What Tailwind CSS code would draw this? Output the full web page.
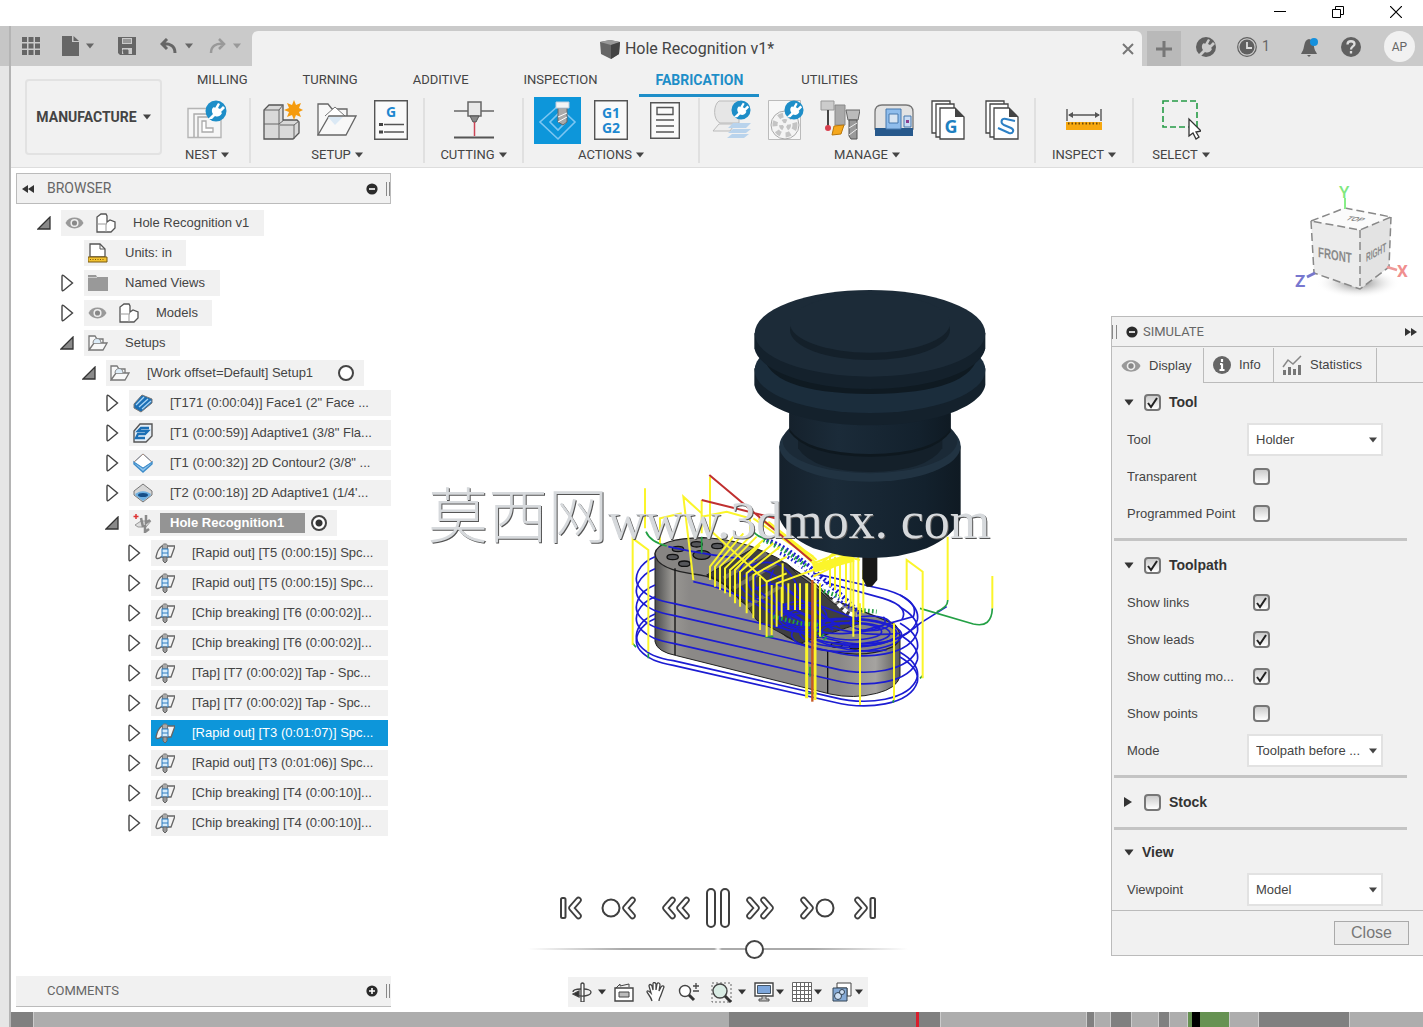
<!DOCTYPE html>
<html lang="en">
<head>
<meta charset="utf-8">
<meta name="viewport" content="width=device-width, initial-scale=1">
<title>Hole Recognition v1*</title>
<script src="https://cdn.jsdelivr.net/npm/@tailwindcss/browser@4"></script>
</head>
<body class="flex min-h-screen flex-col bg-white font-['Liberation_Sans',Arial,sans-serif] text-[13px] text-[#444]">

<!-- shared symbols -->
<svg class="hidden" aria-hidden="true">
  <symbol id="open" viewBox="0 0 14 14"><path d="M13 1v12H1z" fill="#8a8a8a" stroke="#333" stroke-width="1.3"/></symbol>
  <symbol id="closed" viewBox="0 0 14 18"><path d="M3.500 1.500 12.500 9 3.500 16.500c-1 .6-1.500 0-1.500-1v-13c0-1 .5-1.600 1.500-1z" fill="#fff" stroke="#444" stroke-width="1.400"/></symbol>
  <symbol id="caret" viewBox="0 0 8 6"><path d="M0 .5h8L4 5.500z" fill="currentColor"/></symbol>
  <symbol id="eye" viewBox="0 0 20 14"><path d="M.5 7C4-.6 16-.6 19.500 7 16 14.600 4 14.600.5 7z" fill="#999"/><circle cx="10" cy="7" r="4.300" fill="#eee"/><circle cx="10" cy="7" r="2.700" fill="#888"/></symbol>
  <symbol id="body" viewBox="0 0 20 20"><path d="M1 19V4l4-3h5l1 2v6l3-2 5 2v6l-4 4z" fill="#fff" stroke="#555" stroke-width="1.300"/><path d="M11 9l-1 3v7M1 11h9" fill="none" stroke="#999"/></symbol>
  <symbol id="folder" viewBox="0 0 20 20"><path d="M1 17V3h6l2 3h6v4M1 17l5-7h13l-4 7z" fill="#f8f8f8" stroke="#777" stroke-width="1.300"/><path d="M5 10c0-6 8-6 8 0" fill="#dcecf8" stroke="#888"/></symbol>
  <symbol id="drill" viewBox="0 0 20 20"><path d="M1 14C2 9 4 5 7 3h13l-4 11H6c-2 2-5 2-5 0z" fill="#f4f4f4" stroke="#666" stroke-width="1.300"/><path d="M7.500 2c1-1.500 4-1.500 5 0v4h-5z" fill="#aaa" stroke="#777"/><rect x="7" y="6" width="6" height="8" fill="#d7ecfb" stroke="#2f7cc0"/><path d="M8 14h4v4l-2 2-2-2z" fill="#999" stroke="#666"/><path d="M7 10h6" stroke="#2f7cc0"/></symbol>
  <symbol id="plug" viewBox="0 0 22 22"><circle cx="11" cy="11" r="9.500" fill="#1e8ec8" stroke="#1e8ec8" stroke-width="2"/><path d="M3 19l5-5c-2-3-1-6 1-7l1 1 3-5 2 1-2 4 2 1 3-3 2 2-4 4 1 1c-2 4-5 4-7 3l-3 3z" fill="#fff"/></symbol>
  <symbol id="chev" viewBox="0 0 14 24"><path d="M10.500 4 3.500 12l7 8" fill="none" stroke="#3f3f3f" stroke-width="6.500" stroke-linecap="round" stroke-linejoin="round"/><path d="M10.500 4 3.500 12l7 8" fill="none" stroke="#fff" stroke-width="3" stroke-linecap="round" stroke-linejoin="round"/></symbol>
  <symbol id="tick" viewBox="0 0 17 17"><path d="M4 9l3 4 6-9" fill="none" stroke="#222" stroke-width="2"/></symbol>
  <symbol id="minus" viewBox="0 0 12 12"><circle cx="6" cy="6" r="5.600" fill="#2b2b2b"/><path d="M3 6h6" stroke="#fff" stroke-width="1.600"/></symbol>
</svg>

<!-- window buttons -->
<header class="flex h-[26px] items-start justify-end gap-1 text-black">
  <button aria-label="Minimize" class="flex h-[23px] w-[54px] items-center justify-center"><svg class="h-3 w-3" viewBox="0 0 12 12"><path d="M0 5.500h12" stroke="#000"/></svg></button>
  <button aria-label="Restore" class="flex h-[23px] w-[54px] items-center justify-center"><svg class="h-3 w-3" viewBox="0 0 12 12"><path d="M.5 3.500h8v8h-8zM3.500 3V.5h8v8H9" fill="none" stroke="#000"/></svg></button>
  <button aria-label="Close window" class="flex h-[23px] w-[54px] items-center justify-center"><svg class="h-3 w-3" viewBox="0 0 12 12"><path d="M0 0l12 12M12 0 0 12" stroke="#000" stroke-width="1.200"/></svg></button>
</header>

<div class="flex flex-1">
<div class="w-[11px] shrink-0 border-r-2 border-[#b4b4b4] bg-[#e6e6e6]"><div class="h-10 bg-[#c6c6c6]"></div></div>
<div class="flex min-w-0 flex-1 flex-col">

<!-- application bar -->
<div class="flex h-10 bg-[#cacaca] pt-[5px] text-[#666]">
  <div class="flex w-[241px] shrink-0 items-center pb-[5px] pl-[11px]">
    <button aria-label="Data panel"><svg class="h-[18px] w-[18px]" viewBox="0 0 18 18" fill="#666"><path d="M0 0h5v5H0zM6.500 0h5v5h-5zM13 0h5v5h-5zM0 6.500h5v5H0zM6.500 6.500h5v5h-5zM13 6.500h5v5h-5zM0 13h5v5H0zM6.500 13h5v5h-5zM13 13h5v5h-5z"/></svg></button>
    <button aria-label="File" class="ml-[22px] flex items-center gap-[7px]"><svg class="h-5 w-[17px]" viewBox="0 0 17 20" fill="#666"><path d="M0 0h10v6h7v14H0z"/><path d="M11.500 0 17 5h-5.500z"/></svg><svg class="h-[6px] w-2"><use href="#caret"/></svg></button>
    <button aria-label="Save" class="ml-6"><svg class="h-[18px] w-[18px]" viewBox="0 0 18 18"><path d="M0 0h18v18H2l-2-2z" fill="#666"/><path d="M4 1h10v6H4zM4 11h10v6H4z" fill="#cacaca"/><path d="M5 3h8M5 5h8M5 13h5v4H6z" stroke="#666" fill="#666"/></svg></button>
    <button aria-label="Undo" class="ml-6 flex items-center gap-2"><svg class="h-4 w-[17px]" viewBox="0 0 17 16"><path d="M7 1 2 6l5 5M2 6c8-1 13 2 13 9" fill="none" stroke="#666" stroke-width="3"/></svg><svg class="h-[6px] w-2"><use href="#caret"/></svg></button>
    <button aria-label="Redo" class="ml-4 flex items-center gap-[7px] text-[#999]"><svg class="h-4 w-[17px]" viewBox="0 0 17 16"><path d="M10 1l5 5-5 5M15 6C7 5 2 8 2 15" fill="none" stroke="#999" stroke-width="2.500"/></svg><svg class="h-[6px] w-2"><use href="#caret"/></svg></button>
  </div>
  <div class="flex flex-1 items-center rounded-t-md bg-[#f1f1f1] pr-2">
    <h1 class="flex flex-1 items-center justify-center gap-[5px] font-[Roboto,sans-serif] text-[16px] text-[#444]"><svg class="h-5 w-5" viewBox="0 0 20 20"><path d="M0 3l10-2 10 2-1 12-8 5-10-5z" fill="#666"/><path d="M0 3l11 3 9-3-10-2z" fill="#999"/><path d="M11 6v14l8-5 1-12z" fill="#444"/></svg>Hole Recognition v1*</h1>
    <button aria-label="Close tab"><svg class="h-3 w-3" viewBox="0 0 12 12"><path d="M1 1l10 10M11 1 1 11" stroke="#777" stroke-width="2"/></svg></button>
  </div>
  <div class="flex w-[281px] shrink-0 items-center">
    <button aria-label="New design" class="ml-[5px] flex h-full w-[34px] items-center justify-center bg-[#b9b9b9]"><svg class="h-4 w-4" viewBox="0 0 16 16"><path d="M8 0v16M0 8h16" stroke="#777" stroke-width="3"/></svg></button>
    <div class="flex items-center pb-1">
      <button aria-label="Extensions" class="ml-[15px]"><svg class="h-5 w-5" viewBox="0 0 20 20"><circle cx="10" cy="10" r="10" fill="#606060"/><path d="M1 19l6-6c-2-3-1-6 1-7l1 1 3-5 2 1-2 4 2 1 3-3 2 2-4 4 1 1c-2 4-5 4-7 3l-5 5z" fill="#cacaca"/></svg></button>
      <button aria-label="Job status" class="ml-[21px] flex items-center gap-[5px] font-[Roboto,sans-serif] text-[14px]"><svg class="h-5 w-5" viewBox="0 0 20 20"><circle cx="10" cy="10" r="9.300" fill="none" stroke="#606060" stroke-width="1.200"/><circle cx="10" cy="10" r="7.500" fill="#606060"/><path d="M10 5v6h5" fill="none" stroke="#ddd" stroke-width="1.800"/></svg>1</button>
      <button aria-label="Notifications" class="ml-[30px]"><svg class="h-5 w-5" viewBox="0 0 20 20"><path d="M2 15c3-3 1-12 7-13 6 1 4 10 7 13l1 2H1zM7 18h4l-2 2z" fill="#606060"/><circle cx="14" cy="5" r="4" fill="#1590dd"/></svg></button>
      <button aria-label="Help" class="ml-[21px]"><svg class="h-5 w-5" viewBox="0 0 20 20"><circle cx="10" cy="10" r="10" fill="#606060"/><path d="M6.500 7.500c0-4.500 7-4 7-.5 0 2.500-3.500 2.500-3.500 5.500M10 14v2.500" fill="none" stroke="#ddd" stroke-width="2.300"/></svg></button>
      <button class="ml-[23px] h-[31px] w-[31px] rounded-full bg-[#f1f1f1] font-[Roboto,sans-serif] text-[12px]">AP</button>
    </div>
  </div>
</div>

<!-- ribbon -->
<div class="flex h-[102px] border-b border-[#ddd] bg-[#f1f1f1] font-[Roboto,sans-serif] text-[13px] text-[#444]">
  <button class="mt-[13px] ml-[14px] flex h-[76px] w-[137px] shrink-0 items-center justify-center gap-[6px] rounded border-2 border-[#e2e2e2] text-[14px] font-bold">MANUFACTURE<svg class="h-[6px] w-2"><use href="#caret"/></svg></button>
  <div class="ml-[3px] flex flex-col">
    <nav class="flex gap-[29px] pl-[19px]">
      <a href="#" class="flex h-[31px] items-center border-b-[3px] border-transparent px-[13px]">MILLING</a>
      <a href="#" class="flex h-[31px] items-center border-b-[3px] border-transparent px-[13px]">TURNING</a>
      <a href="#" class="flex h-[31px] items-center border-b-[3px] border-transparent px-[13px]">ADDITIVE</a>
      <a href="#" class="flex h-[31px] items-center border-b-[3px] border-transparent px-[13px]">INSPECTION</a>
      <a href="#" class="flex h-[31px] items-center border-b-[3px] border-[#1e8ec8] px-4 text-[14px] font-bold text-[#1e8ec8]">FABRICATION</a>
      <a href="#" class="flex h-[31px] items-center border-b-[3px] border-transparent px-[13px]">UTILITIES</a>
    </nav>
    <div class="flex h-[70px]">
      <section class="flex w-[84px] flex-col items-center">
        <div class="flex h-[46px] shrink-0 items-center">
          <button aria-label="Nest" class="flex w-[54px] justify-center"><svg class="h-10 w-10" viewBox="0 0 40 40"><path d="M1 8.500h33v29H1z" fill="#f6f6f6" stroke="#b5b5b5" stroke-width="1.400"/><path d="M7 37V14h20M11 37V17h14" fill="none" stroke="#aaa" stroke-width="1.400"/><path d="M15 32V21h4v7h7v4z" fill="#fff" stroke="#aaa" stroke-width="1.300"/><use href="#plug" x="18" y="0" width="22" height="22"/></svg></button>
        </div>
        <button class="flex h-6 shrink-0 items-center gap-1">NEST<svg class="h-[6px] w-2"><use href="#caret"/></svg></button>
      </section>
      <span class="mt-[1px] h-[65px] w-[2px] bg-[#e0e0e0]"></span>
      <section class="flex w-[172px] flex-col items-center">
        <div class="flex h-[46px] shrink-0 items-center">
          <button aria-label="Setup" class="flex w-[54px] justify-center"><svg class="h-10 w-10" viewBox="0 0 40 40"><path d="M1 39V10l5-5h14v15h14l2 2v11l-6 6z" fill="#d9d9d9" stroke="#555" stroke-width="1.300"/><path d="M1 24h15v15M16 24V10M1 10h15l4-5M16 24l5-4M31 39V25H17M31 25l5-4" fill="none" stroke="#666"/><path d="M31 0l2 5 5-2-2 5 4 2-4 2 2 5-5-2-2 5-2-5-5 2 2-5-5-2 5-2-2-5 5 2z" fill="#f59b0e"/></svg></button>
          <button aria-label="Open folder" class="flex w-[54px] justify-center"><svg class="h-9 w-10" viewBox="0 0 40 36"><path d="M1 33V2h10l4 5h15v7" fill="#f8f8f8" stroke="#666" stroke-width="1.300"/><path d="M8 14l10-9 10 9" fill="#fff" stroke="#777"/><path d="M1 33 12 14h27L29 33z" fill="#f8f8f8" stroke="#666" stroke-width="1.300"/><path d="M11 15h15l-8 8z" fill="#dbe9f5"/></svg></button>
          <button aria-label="NC program" class="flex w-[54px] justify-center"><svg class="h-10 w-[34px]" viewBox="0 0 34 40"><path d="M.7.700h32.600v38.600H.7z" fill="#fafafa" stroke="#555" stroke-width="1.400"/><text x="17" y="17" text-anchor="middle" font-family="Open Sans" font-weight="700" font-size="14" fill="#1e88d0">G</text><path d="M10 24.500h20M10 32h20" stroke="#555" stroke-width="1.300"/><path d="M5 23h4v3H5zM5 30.500h4v3H5z" fill="#444"/></svg></button>
        </div>
        <button class="flex h-6 shrink-0 items-center gap-1">SETUP<svg class="h-[6px] w-2"><use href="#caret"/></svg></button>
      </section>
      <span class="mt-[1px] h-[65px] w-[2px] bg-[#e0e0e0]"></span>
      <section class="flex w-[97px] flex-col items-center">
        <div class="flex h-[46px] shrink-0 items-center">
          <button aria-label="Cutting" class="flex w-[54px] justify-center"><svg class="h-[38px] w-10" viewBox="0 0 40 38"><path d="M0 10h40" stroke="#666" stroke-width="1.500"/><path d="M14 1h13v14H14z" fill="#e8e8e8" stroke="#666" stroke-width="1.500"/><path d="M16 15h9l-3 6h-3z" fill="#888" stroke="#555"/><path d="M20.500 21v14" stroke="#cc4455" stroke-width="1.500"/><path d="M0 36.500h40" stroke="#555" stroke-width="2"/></svg></button>
        </div>
        <button class="flex h-6 shrink-0 items-center gap-1">CUTTING<svg class="h-[6px] w-2"><use href="#caret"/></svg></button>
      </section>
      <span class="mt-[1px] h-[65px] w-[2px] bg-[#e0e0e0]"></span>
      <section class="flex w-[174px] flex-col items-center">
        <div class="flex h-[46px] shrink-0 items-center">
          <button aria-label="Simulate" class="flex w-[54px] justify-center"><svg class="h-[47px] w-[47px] bg-[#0d96da]" viewBox="0 0 47 47"><path d="M24 9 41 25 24 42 6 25z M24 17l8 8-8 8-8-8z" fill="none" stroke="#7cc6f2" stroke-width="1.600"/><path d="M24 11h9v14l-4 3-5-3z" fill="#aaa" stroke="#666"/><path d="M24 20l9-4M24 25l9-5" stroke="#fff"/><path d="M22 5h13v6H22z" fill="#f4f4f4" stroke="#bcd"/></svg></button>
          <button aria-label="Post process" class="flex w-[54px] justify-center"><svg class="h-10 w-[34px]" viewBox="0 0 34 40"><path d="M.7.700h32.600v38.600H.7z" fill="#fafafa" stroke="#555" stroke-width="1.400"/><g text-anchor="middle" font-family="Open Sans" font-weight="700" font-size="14" fill="#1e88d0"><text x="17" y="18">G1</text><text x="17" y="33">G2</text></g></svg></button>
          <button aria-label="Setup sheet" class="flex w-[54px] justify-center"><svg class="h-[37px] w-[30px]" viewBox="0 0 30 37" fill="#fafafa" stroke="#555" stroke-width="1.400"><path d="M.7.700h28.600v35.600H.7zM7 5.500h16v7H7zM6 18h18M6 24h18M6 30h18"/></svg></button>
        </div>
        <button class="flex h-6 shrink-0 items-center gap-1">ACTIONS<svg class="h-[6px] w-2"><use href="#caret"/></svg></button>
      </section>
      <span class="mt-[1px] h-[65px] w-[2px] bg-[#e0e0e0]"></span>
      <section class="flex w-[334px] flex-col items-center">
        <div class="flex h-[46px] shrink-0 items-center">
          <button aria-label="Additive build" class="flex w-[54px] justify-center"><svg class="h-10 w-10" viewBox="0 0 40 40"><path d="M7 1h20v22H8C1 20 1 5 7 1z" fill="#e6e6e6" stroke="#bbb"/><path d="M7 24 1 31h17l5-7z" fill="#eee" stroke="#bbb"/><path d="M21 23h18l-5 5H16zM21 29h18l-5 4H16zM20 34h17l-5 4H15z" fill="#b9d3ec"/><use href="#plug" x="19" y="0" width="20" height="20"/></svg></button>
          <button aria-label="Material library" class="flex w-[54px] justify-center"><svg class="h-10 w-9" viewBox="0 0 36 40"><path d="M.5.500h32v39H.5z" fill="#f7f7f7" stroke="#bbb"/><circle cx="17" cy="25" r="14" fill="#f4f4f4" stroke="#aaa"/><circle cx="17" cy="25" r="10" fill="none" stroke="#c4c4c4" stroke-width="5" stroke-dasharray="5 5"/><circle cx="17" cy="25" r="4" fill="none" stroke="#c4c4c4" stroke-width="4" stroke-dasharray="4 4"/><use href="#plug" x="16" y="0" width="20" height="20"/></svg></button>
          <button aria-label="Tool library" class="flex w-[54px] justify-center"><svg class="h-10 w-10" viewBox="0 0 40 40"><path d="M1 1h13v9H1z" fill="#ccc" stroke="#999"/><path d="M8 10v17" stroke="#444" stroke-width="2"/><circle cx="8" cy="28" r="3" fill="#d9404f"/><path d="M15 5h10v20H15z" fill="#aaa" stroke="#888"/><path d="M14 26l10-1-3 9-9 1z" fill="#f5a81c" stroke="#b9770b"/><path d="M26 10h14l-2 10H28z" fill="#bbb" stroke="#666"/><path d="M29 20h8v19h-6l-2-3z" fill="#999" stroke="#555"/><path d="M29 28l8-5M29 35l8-6" stroke="#eee"/></svg></button>
          <button aria-label="Machine library" class="flex w-[54px] justify-center"><svg class="h-8 w-10" viewBox="0 0 40 32"><path d="M1 25V8q0-7 7-7h24q7 0 7 7v17z" fill="#e3e3e3" stroke="#777" stroke-width="1.300"/><path d="M1 24h38v8H1z" fill="#27598c"/><path d="M12 5h15v20H12z" fill="#8fbdec" stroke="#4678ad"/><path d="M15 10h9v9h-9z" fill="#d8e5f2" stroke="#4678ad"/><path d="M30 12h7v11h-7z" fill="#c8dcf5" stroke="#4678ad"/><path d="M32 16h3v3h-3z" fill="#8b3f8f"/></svg></button>
          <button aria-label="Post library" class="flex w-[54px] justify-center"><svg class="h-10 w-[34px]" viewBox="0 0 34 40"><g fill="#fff" stroke="#444" stroke-width="1.300"><path d="M1 33V1h18v32z"/><path d="M5 37V4h18v33z"/><path d="M9 39V8h15l9 9v22z"/></g><path d="M24 8v9h9z" fill="#444"/><text x="20" y="33" text-anchor="middle" font-family="Open Sans" font-weight="700" font-size="18" fill="#1e80c0">G</text></svg></button>
          <button aria-label="Template library" class="flex w-[54px] justify-center"><svg class="h-10 w-[34px]" viewBox="0 0 34 40"><g fill="#fff" stroke="#444" stroke-width="1.300"><path d="M1 33V1h18v32z"/><path d="M5 37V4h18v33z"/><path d="M9 39V8h15l9 9v22z"/></g><path d="M24 8v9h9z" fill="#444"/><path d="M30 21l-9-2c-5-1-6 4-2 6l7 3c4 2 2 6-2 5l-11-5" fill="none" stroke="#2d80c5" stroke-width="2"/></svg></button>
        </div>
        <button class="flex h-6 shrink-0 items-center gap-1">MANAGE<svg class="h-[6px] w-2"><use href="#caret"/></svg></button>
      </section>
      <span class="mt-[1px] h-[65px] w-[2px] bg-[#e0e0e0]"></span>
      <section class="flex w-[96px] flex-col items-center">
        <div class="flex h-[46px] shrink-0 items-center">
          <button aria-label="Measure" class="flex w-[54px] justify-center"><svg class="h-[22px] w-9" viewBox="0 0 36 22"><path d="M1 0v12M35 0v12M3 6h30" stroke="#555" stroke-width="1.400"/><path d="M2 6l5-3v6zM34 6l-5-3v6z" fill="#555"/><path d="M0 13h36v8H0z" fill="#f7a80f"/><path d="M2 14.500h32" stroke="#6b4a0a" stroke-width="2" stroke-dasharray="1.500 2"/></svg></button>
        </div>
        <button class="flex h-6 shrink-0 items-center gap-1">INSPECT<svg class="h-[6px] w-2"><use href="#caret"/></svg></button>
      </section>
      <span class="mt-[1px] h-[65px] w-[2px] bg-[#e0e0e0]"></span>
      <section class="flex w-[94px] flex-col items-center">
        <div class="flex h-[46px] shrink-0 items-center">
          <button aria-label="Select" class="flex w-[54px] justify-center"><svg class="h-10 w-[39px]" viewBox="0 0 39 40"><path d="M1 1h34v26H1z" fill="none" stroke="#259b45" stroke-width="1.600" stroke-dasharray="6 3"/><path d="M27 19v17l4-3 3 6 3-2-3-5 5-1z" fill="#fff" stroke="#333" stroke-width="1.300"/></svg></button>
        </div>
        <button class="flex h-6 shrink-0 items-center gap-1">SELECT<svg class="h-[6px] w-2"><use href="#caret"/></svg></button>
      </section>
    </div>
  </div>
</div>

<!-- workspace -->
<main class="flex flex-1">
  <aside class="ml-[5px] flex w-[375px] shrink-0 flex-col pt-[5px] pb-[5px]">
    <h2 class="flex h-[31px] items-center border border-[#bbb] bg-[#f1f1f1] pl-[5px] font-[Roboto,sans-serif] text-[14px] text-[#666]">
      <svg class="h-2 w-3" viewBox="0 0 12 8"><path d="M6 0v8L0 4zM12 0v8L6 4z" fill="#333"/></svg><span class="ml-[13px] flex-1">BROWSER</span><svg class="h-3 w-3"><use href="#minus"/></svg><span class="ml-2 h-[14px] w-[4px] border-x border-[#888]"></span>
    </h2>
    <ul class="mt-[4px]">
      <li class="flex h-[30px] items-center gap-[10px] pl-[21px]"><svg class="h-[14px] w-[14px] shrink-0"><use href="#open"/></svg><span class="flex h-[26px] items-center gap-[17px] bg-[#f1f1f1] pr-[15px] pl-1"><span class="flex items-center gap-3"><svg class="h-[14px] w-[19px]"><use href="#eye"/></svg><svg class="h-5 w-5"><use href="#body"/></svg></span>Hole Recognition v1</span></li>
      <li class="flex h-[30px] items-center pl-[68px]"><span class="flex h-[26px] items-center gap-[17px] bg-[#f1f1f1] pr-[14px] pl-1"><svg class="h-5 w-5" viewBox="0 0 20 20"><path d="M2 14V1h10l5 5v8z" fill="#fff" stroke="#555" stroke-width="1.300"/><path d="M12 1v5h5" fill="none" stroke="#555"/><path d="M0 14h19v5H0z" fill="#f2c230" stroke="#7a5a10"/><path d="M2 16.500h15" stroke="#7a5a10" stroke-dasharray="1 1.500"/></svg>Units: in</span></li>
      <li class="flex h-[30px] items-center gap-[10px] pl-[44px]"><svg class="h-[18px] w-[14px] shrink-0"><use href="#closed"/></svg><span class="flex h-[26px] items-center gap-[17px] bg-[#f1f1f1] pr-[15px] pl-1"><svg class="h-5 w-5" viewBox="0 0 20 20"><path d="M0 2h8l1 2h11v14H0z" fill="#999"/><path d="M0 4.500h9" stroke="#ccc"/></svg>Named Views</span></li>
      <li class="flex h-[30px] items-center gap-[10px] pl-[44px]"><svg class="h-[18px] w-[14px] shrink-0"><use href="#closed"/></svg><span class="flex h-[26px] items-center gap-[17px] bg-[#f1f1f1] pr-[14px] pl-1"><span class="flex items-center gap-3"><svg class="h-[14px] w-[19px]"><use href="#eye"/></svg><svg class="h-5 w-5"><use href="#body"/></svg></span>Models</span></li>
      <li class="flex h-[30px] items-center gap-[10px] pl-[44px]"><svg class="h-[14px] w-[14px] shrink-0"><use href="#open"/></svg><span class="flex h-[26px] items-center gap-[17px] bg-[#f1f1f1] pr-[15px] pl-1"><svg class="h-5 w-5"><use href="#folder"/></svg>Setups</span></li>
      <li class="flex h-[30px] items-center gap-[10px] pl-[66px]"><svg class="h-[14px] w-[14px] shrink-0"><use href="#open"/></svg><span class="flex h-[26px] items-center bg-[#f1f1f1] pr-[10px] pl-1"><svg class="h-5 w-5"><use href="#folder"/></svg><label for="setup1" class="mr-[25px] ml-[17px]">[Work offset=Default] Setup1</label><input id="setup1" type="radio" name="active" class="h-4 w-4 appearance-none rounded-full border-2 border-[#444] bg-white"></span></li>

      <li class="flex h-[30px] items-center gap-[10px] pl-[89px]"><svg class="h-[18px] w-[14px] shrink-0"><use href="#closed"/></svg><span class="flex h-[26px] flex-1 items-center gap-[17px] bg-[#f1f1f1] pl-1 whitespace-nowrap"><svg class="h-5 w-5 shrink-0" viewBox="0 0 20 20"><path d="M1 11 9 2l10 4v4L8 19l-7-4z" fill="#1b6fb5" stroke="#777"/><path d="M3 12 11 4M6 14l9-8M9 16l9-8" stroke="#a8d4f5" stroke-width="1.300"/></svg>[T171 (0:00:04)] Face1 (2" Face ...</span></li>
      <li class="flex h-[30px] items-center gap-[10px] pl-[89px]"><svg class="h-[18px] w-[14px] shrink-0"><use href="#closed"/></svg><span class="flex h-[26px] flex-1 items-center gap-[17px] bg-[#f1f1f1] pl-1 whitespace-nowrap"><svg class="h-5 w-5 shrink-0" viewBox="0 0 20 20"><path d="M1 19V8l6-7h12v12l-6 6z" fill="#e4eef7" stroke="#555" stroke-width="1.400"/><path d="M16 5H8L5 8h10l-3 3H5l-2 4h9" fill="none" stroke="#1b6fb5" stroke-width="2.300"/></svg>[T1 (0:00:59)] Adaptive1 (3/8" Fla...</span></li>
      <li class="flex h-[30px] items-center gap-[10px] pl-[89px]"><svg class="h-[18px] w-[14px] shrink-0"><use href="#closed"/></svg><span class="flex h-[26px] flex-1 items-center gap-[17px] bg-[#f1f1f1] pl-1 whitespace-nowrap"><svg class="h-5 w-5 shrink-0" viewBox="0 0 20 20"><path d="M1 9l9 6 9-6v2l-9 8-9-8z" fill="#8fc4ee" stroke="#3d8cc9" stroke-width="1.400"/><path d="M10 1l9 8-9 6-9-6z" fill="#fff" stroke="#3d8cc9"/><path d="M1 9l9-8 9 8" fill="none" stroke="#b09080"/></svg>[T1 (0:00:32)] 2D Contour2 (3/8" ...</span></li>
      <li class="flex h-[30px] items-center gap-[10px] pl-[89px]"><svg class="h-[18px] w-[14px] shrink-0"><use href="#closed"/></svg><span class="flex h-[26px] flex-1 items-center gap-[17px] bg-[#f1f1f1] pl-1 whitespace-nowrap"><svg class="h-5 w-5 shrink-0" viewBox="0 0 20 20"><path d="M10 1l9 7v4l-9 7-9-7V8z" fill="#d6d6d6" stroke="#777"/><path d="M2 12c3-5 13-5 16 0l-8 6z" fill="#6db0e2"/><ellipse cx="10" cy="12" rx="5" ry="2" fill="#174f87"/></svg>[T2 (0:00:18)] 2D Adaptive1 (1/4'...</span></li>
      <li class="flex h-[30px] items-center gap-[10px] pl-[89px]"><svg class="h-[14px] w-[14px] shrink-0"><use href="#open"/></svg><span class="flex h-[26px] items-center bg-[#f1f1f1] pr-[10px] pl-1"><svg class="h-5 w-5" viewBox="0 0 20 20"><path d="M2 12l6-4h10l-5 6H5z" fill="#ddd" stroke="#999"/><path d="M8 5l2 9M13 2v8l4-3M12 12v7l4-3" fill="none" stroke="#8a8a8a" stroke-width="2.500"/><path d="M3 1v5M.5 3.500h5" stroke="#d33" stroke-width="1.500"/></svg><label for="hole1" class="ml-[7px] bg-[#949494] pr-[21px] pl-[10px] leading-[20px] font-bold text-white">Hole Recognition1</label><input id="hole1" type="radio" name="active" checked class="ml-[6px] h-4 w-4 appearance-none rounded-full border-2 border-[#444] bg-[radial-gradient(#333_0_3px,#fff_4px)]"></span></li>

      <li class="flex h-[30px] items-center gap-[10px] pr-[3px] pl-[111px]"><svg class="h-[18px] w-[14px] shrink-0"><use href="#closed"/></svg><span class="flex h-[26px] flex-1 items-center gap-[17px] bg-[#f1f1f1] pl-1 whitespace-nowrap"><svg class="h-5 w-5 shrink-0"><use href="#drill"/></svg>[Rapid out] [T5 (0:00:15)] Spc...</span></li>
      <li class="flex h-[30px] items-center gap-[10px] pr-[3px] pl-[111px]"><svg class="h-[18px] w-[14px] shrink-0"><use href="#closed"/></svg><span class="flex h-[26px] flex-1 items-center gap-[17px] bg-[#f1f1f1] pl-1 whitespace-nowrap"><svg class="h-5 w-5 shrink-0"><use href="#drill"/></svg>[Rapid out] [T5 (0:00:15)] Spc...</span></li>
      <li class="flex h-[30px] items-center gap-[10px] pr-[3px] pl-[111px]"><svg class="h-[18px] w-[14px] shrink-0"><use href="#closed"/></svg><span class="flex h-[26px] flex-1 items-center gap-[17px] bg-[#f1f1f1] pl-1 whitespace-nowrap"><svg class="h-5 w-5 shrink-0"><use href="#drill"/></svg>[Chip breaking] [T6 (0:00:02)]...</span></li>
      <li class="flex h-[30px] items-center gap-[10px] pr-[3px] pl-[111px]"><svg class="h-[18px] w-[14px] shrink-0"><use href="#closed"/></svg><span class="flex h-[26px] flex-1 items-center gap-[17px] bg-[#f1f1f1] pl-1 whitespace-nowrap"><svg class="h-5 w-5 shrink-0"><use href="#drill"/></svg>[Chip breaking] [T6 (0:00:02)]...</span></li>
      <li class="flex h-[30px] items-center gap-[10px] pr-[3px] pl-[111px]"><svg class="h-[18px] w-[14px] shrink-0"><use href="#closed"/></svg><span class="flex h-[26px] flex-1 items-center gap-[17px] bg-[#f1f1f1] pl-1 whitespace-nowrap"><svg class="h-5 w-5 shrink-0"><use href="#drill"/></svg>[Tap] [T7 (0:00:02)] Tap - Spc...</span></li>
      <li class="flex h-[30px] items-center gap-[10px] pr-[3px] pl-[111px]"><svg class="h-[18px] w-[14px] shrink-0"><use href="#closed"/></svg><span class="flex h-[26px] flex-1 items-center gap-[17px] bg-[#f1f1f1] pl-1 whitespace-nowrap"><svg class="h-5 w-5 shrink-0"><use href="#drill"/></svg>[Tap] [T7 (0:00:02)] Tap - Spc...</span></li>
      <li class="flex h-[30px] items-center gap-[10px] pr-[3px] pl-[111px]"><svg class="h-[18px] w-[14px] shrink-0"><use href="#closed"/></svg><span class="flex h-[26px] flex-1 items-center gap-[17px] bg-[#0d96da] pl-1 whitespace-nowrap text-white"><svg class="h-5 w-5 shrink-0"><use href="#drill"/></svg>[Rapid out] [T3 (0:01:07)] Spc...</span></li>
      <li class="flex h-[30px] items-center gap-[10px] pr-[3px] pl-[111px]"><svg class="h-[18px] w-[14px] shrink-0"><use href="#closed"/></svg><span class="flex h-[26px] flex-1 items-center gap-[17px] bg-[#f1f1f1] pl-1 whitespace-nowrap"><svg class="h-5 w-5 shrink-0"><use href="#drill"/></svg>[Rapid out] [T3 (0:01:06)] Spc...</span></li>
      <li class="flex h-[30px] items-center gap-[10px] pr-[3px] pl-[111px]"><svg class="h-[18px] w-[14px] shrink-0"><use href="#closed"/></svg><span class="flex h-[26px] flex-1 items-center gap-[17px] bg-[#f1f1f1] pl-1 whitespace-nowrap"><svg class="h-5 w-5 shrink-0"><use href="#drill"/></svg>[Chip breaking] [T4 (0:00:10)]...</span></li>
      <li class="flex h-[30px] items-center gap-[10px] pr-[3px] pl-[111px]"><svg class="h-[18px] w-[14px] shrink-0"><use href="#closed"/></svg><span class="flex h-[26px] flex-1 items-center gap-[17px] bg-[#f1f1f1] pl-1 whitespace-nowrap"><svg class="h-5 w-5 shrink-0"><use href="#drill"/></svg>[Chip breaking] [T4 (0:00:10)]...</span></li>
    </ul>
    <h2 class="mt-auto flex h-[31px] items-center border-b border-[#bbb] bg-[#f1f1f1] pl-[31px] font-[Roboto,sans-serif] text-[13px] text-[#666]">
      <span class="flex-1">COMMENTS</span><svg class="h-3 w-3" viewBox="0 0 12 12"><circle cx="6" cy="6" r="5.600" fill="#2b2b2b"/><path d="M3 6h6M6 3v6" stroke="#fff" stroke-width="1.600"/></svg><span class="mr-[1px] ml-2 h-[14px] w-[4px] border-x border-[#888]"></span>
    </h2>
  </aside>

  <!-- viewport -->
  <section class="flex min-w-0 flex-1 flex-col items-center pr-[66px] pb-[5px]">
    <div class="relative mt-[102px] h-[450px] w-[580px]">
      <svg class="h-[450px] w-[580px]" viewBox="-516 0 1740 1350" aria-label="Toolpath simulation">
        <defs>
          <linearGradient id="steel" x1="0" x2="1"><stop offset="0" stop-color="#4c4c4c"/><stop offset=".07" stop-color="#999793"/><stop offset=".14" stop-color="#8b8987"/><stop offset=".75" stop-color="#8b8987"/><stop offset=".9" stop-color="#a5a3a0"/><stop offset="1" stop-color="#5a5a5a"/></linearGradient>
          <linearGradient id="holder" x1="0" x2="1"><stop offset="0" stop-color="#15212c"/><stop offset=".3" stop-color="#1b2b39"/><stop offset=".8" stop-color="#13212d"/><stop offset="1" stop-color="#0f1a23"/></linearGradient>
          <path id="loop" d="M165 860C115 880 95 925 120 955Q150 990 220 1000L700 1110C800 1135 930 1120 952 1050Q960 1010 900 975"/>
        </defs>
        <!-- part -->
        <path d="M165 850V1115Q170 1145 230 1157L690 1272Q760 1288 830 1270 890 1255 900 1220V1110Q700 1000 560 880L330 810z" fill="url(#steel)" stroke="#222" stroke-width="3"/>
        <path d="M165 850Q175 805 310 803 420 808 500 850L600 910Q640 930 690 985L880 1060Q920 1100 880 1130 800 1165 700 1145 620 1135 560 1100L420 990Q370 925 300 915 165 900 165 850z" fill="#878583" stroke="#222" stroke-width="4"/>
        <path d="M320 915 460 835Q540 855 590 910 650 950 700 1000 760 1030 780 1060L600 1120 470 1050Q400 940 320 915z" fill="#3f3f41" stroke="#222" stroke-width="3"/>
        <path d="M370 925 500 850M400 955 530 880M440 1010 540 950" fill="none" stroke="#6d6b69" stroke-width="12"/>
        <path d="M225 895V1155M683 1140V1270" stroke="#111" stroke-width="4"/>
        <g fill="#55565a" stroke="#111" stroke-width="4"><ellipse cx="290" cy="823" rx="17" ry="8"/><ellipse cx="352" cy="828" rx="17" ry="8"/><ellipse cx="234" cy="837" rx="17" ry="8"/><ellipse cx="218" cy="861" rx="17" ry="8"/><ellipse cx="253" cy="881" rx="17" ry="8"/><ellipse cx="305" cy="855" rx="26" ry="13"/><ellipse cx="710" cy="1125" rx="17" ry="7"/><ellipse cx="765" cy="1130" rx="17" ry="7"/></g>
        <!-- cutting moves -->
        <g fill="none" stroke="#1c1cd2" stroke-width="5">
          <use href="#loop"/><use href="#loop" y="36"/><use href="#loop" y="85"/><use href="#loop" y="120"/><use href="#loop" y="172"/><use href="#loop" y="186"/>
          <path d="M205 830Q340 860 470 870M280 935Q420 960 560 1060T860 1140M640 910 860 960Q960 990 940 1040L760 1090M650 930 850 985Q930 1010 905 1050M560 1000Q700 1110 900 1090M1040 1010 960 1060Q860 1150 700 1120"/>
          <path d="M430 880Q380 960 500 1000T640 1090M450 900Q420 960 520 1010T680 1090M470 910Q440 960 540 1000T700 1080M520 900Q480 980 600 1050M520 990Q600 1100 740 1090T850 1040M440 890Q520 860 560 900T600 1000M430 920Q480 880 530 920T560 1030M460 960Q520 920 580 970T700 1060M500 1020 640 1000 780 1050M520 1070 700 1050M560 960 720 1070M540 1040 660 990"/>
          <ellipse cx="740" cy="1095" rx="165" ry="50"/><ellipse cx="745" cy="1090" rx="145" ry="42"/><ellipse cx="750" cy="1090" rx="120" ry="32"/><ellipse cx="755" cy="1085" rx="90" ry="25"/><ellipse cx="810" cy="1060" rx="60" ry="22"/><ellipse cx="600" cy="1040" rx="80" ry="45"/><ellipse cx="600" cy="1045" rx="62" ry="32"/><ellipse cx="600" cy="1050" rx="40" ry="20"/>
          <path d="M500 810Q560 830 640 900T780 1030" stroke-width="14" stroke-dasharray="6 7"/>
          <path d="M540 850Q590 870 660 940T770 1020" stroke-width="10" stroke-dasharray="5 8"/>
        </g>
        <path d="M590 880Q640 900 690 970T770 1035" fill="none" stroke="#fff" stroke-width="13" stroke-dasharray="13 9"/>
        <!-- leads -->
        <g fill="none" stroke="#23a045" stroke-width="5">
          <path d="M138 785Q150 815 200 828M457 770Q455 795 500 808M960 1015 1120 1062Q1175 1075 1177 1015M1043 990Q1045 1010 1010 1025M305 800V850"/>
          <path d="M490 810Q560 840 620 890M520 1040 600 1060 660 1065M660 960 720 980M780 1020 830 1025M640 1070 680 1110" stroke-width="13" stroke-dasharray="5 7"/>
          <path d="M98 1120l10 12M145 1150v15M960 1225l8 -8M620 1270h30M880 1290v8M630 1190v30M495 1100h25"/>
        </g>
        <!-- links -->
        <g fill="none" stroke="#fbf52a" stroke-width="6">
          <path d="M98 1125V805L145 840V1145M135 655V775M180 820V745L245 730M280 930 250 680 305 730V790M330 620V780L500 935M305 690V740L380 725 450 745V800M500 1100V935L560 910M515 1095V945M548 1000V880M920 960V870L968 905V1225M1043 990V800M1177 1015V918M882 1290V1060M780 1305V1000M760 1100V870"/>
          <path d="M330 930V890L400 800M345 950V890L430 790M360 960V890L450 800M375 970V895L470 800M390 980V900L490 810M405 1000V900L480 825M420 1010V905L520 820M440 1030V910L540 830M460 1045V915L560 860M480 1080V920"/>
          <path d="M530 1070V940L640 900M545 1040V950M565 1020V940M585 1020V940M600 1020V940M660 1100V940M460 745 640 870M475 745 640 860M490 750 645 865M505 755 650 870M520 770 650 880M535 780 650 890M640 900 700 850 780 870M640 920 780 850M690 950V860M705 960V860M720 980V860M738 1000V860M752 1010V860M775 1020V860M790 1030V900M640 880 740 840"/>
          <path d="M620 1285V940M645 1290V940" stroke-width="9"/><path d="M640 895 760 862" stroke-width="26"/>
        </g>
        <path d="M328 615 635 873M305 690 535 747" stroke="#c03030" stroke-width="6"/>
        <path d="M637 930V1295" stroke="#c85a20" stroke-width="7"/>
        <!-- tool and holder -->
        <path d="M787 850V925L800 950 815 950 832 930V850z" fill="#171717"/>
        <path d="M538 530V745Q560 800 640 835 730 865 810 864 900 865 980 835 1060 800 1082 745V530Q1070 500 1045 480H575Q550 500 538 530z" fill="url(#holder)"/>
        <ellipse cx="810" cy="528" rx="272" ry="107" fill="#213342"/>
        <ellipse cx="810" cy="512" rx="262" ry="98" fill="#1b2a37"/>
        <path d="M594 500V535Q640 605 810 606 980 605 1027 535V500z" fill="#14202a"/>
        <path d="M568 430V485Q620 558 810 560 1000 558 1052 485V430z" fill="#0e181f"/>
        <path d="M568 420V477Q620 550 810 552 1000 550 1052 477V420z" fill="url(#holder)"/>
        <path d="M463 295V345C475 410 620 466 810 466S1145 410 1156 345V295z" fill="#14212c"/>
        <ellipse cx="810" cy="300" rx="346" ry="129" fill="#1b2d3c"/>
        <path d="M490 250Q500 370 810 372 1120 370 1135 250z" fill="#0f1a22"/>
        <path d="M463 190V235C475 300 620 357 810 357S1145 300 1156 235V190z" fill="#14212c"/>
        <ellipse cx="810" cy="190" rx="346" ry="130" fill="#1c2b38"/>
        <ellipse cx="810" cy="180" rx="240" ry="90" fill="#14202a"/>
        <ellipse cx="810" cy="160" rx="240" ry="88" fill="#1c2b38"/>
      </svg>
      <p class="pointer-events-none absolute top-[210px] left-0 flex items-baseline whitespace-nowrap text-[#d6d9dc] [text-shadow:1px_1px_0_#555]"><span class="font-['Noto_Sans_CJK_SC',sans-serif] text-[60px] leading-[64px] font-light">莫西网</span><span class="font-['Liberation_Serif',serif] text-[52px] leading-[64px]">www.3dmox. com</span></p>
    </div>

    <div class="mt-auto flex h-10 items-center">
      <button aria-label="Go to start" class="flex w-6"><svg class="h-6 w-6" viewBox="0 0 24 24"><rect x="1" y="2" width="4.500" height="20" rx="1.500" fill="#fff" stroke="#3f3f3f" stroke-width="2"/><use href="#chev" x="8" width="14" height="24"/></svg></button>
      <button aria-label="Previous operation" class="ml-[17px]"><svg class="h-6 w-9" viewBox="0 0 36 24"><circle cx="10" cy="12" r="8.500" fill="#fff" stroke="#3f3f3f" stroke-width="2"/><use href="#chev" x="21" width="14" height="24"/></svg></button>
      <button aria-label="Step back" class="ml-[25px]"><svg class="h-6 w-[29px]" viewBox="0 0 29 24"><use href="#chev" x="0" width="14" height="24"/><use href="#chev" x="14" width="14" height="24"/></svg></button>
      <button aria-label="Pause" class="mx-[15px]"><svg class="h-10 w-6" viewBox="0 0 24 40" fill="#fff" stroke="#3f3f3f" stroke-width="2"><rect x="1" y="1" width="8" height="38" rx="4"/><rect x="15" y="1" width="8" height="38" rx="4"/></svg></button>
      <button aria-label="Step forward" class="mr-[25px]"><svg class="h-6 w-[29px] rotate-180" viewBox="0 0 29 24"><use href="#chev" x="0" width="14" height="24"/><use href="#chev" x="14" width="14" height="24"/></svg></button>
      <button aria-label="Next operation" class="mr-[17px]"><svg class="h-6 w-9 rotate-180" viewBox="0 0 36 24"><circle cx="10" cy="12" r="8.500" fill="#fff" stroke="#3f3f3f" stroke-width="2"/><use href="#chev" x="21" width="14" height="24"/></svg></button>
      <button aria-label="Go to end" class="flex w-6"><svg class="h-6 w-6 rotate-180" viewBox="0 0 24 24"><rect x="1" y="2" width="4.500" height="20" rx="1.500" fill="#fff" stroke="#3f3f3f" stroke-width="2"/><use href="#chev" x="8" width="14" height="24"/></svg></button>
    </div>
    <input type="range" aria-label="Playback speed" min="0" max="100" value="60" class="mt-[11px] h-5 w-[380px] appearance-none bg-[linear-gradient(90deg,transparent,#aaa_25%,#aaa_49%,transparent_50%,#aaa_51%,#aaa_75%,transparent)] bg-[length:100%_2px] bg-center bg-no-repeat [&::-webkit-slider-thumb]:h-[19px] [&::-webkit-slider-thumb]:w-[19px] [&::-webkit-slider-thumb]:appearance-none [&::-webkit-slider-thumb]:rounded-full [&::-webkit-slider-thumb]:border-2 [&::-webkit-slider-thumb]:border-[#444] [&::-webkit-slider-thumb]:bg-white">
    <div class="mt-[18px] flex h-[30px] items-center bg-[#f1f1f1] pr-[5px] pl-[4px] text-[#333]">
      <button aria-label="Orbit" class="flex items-center gap-[6px]"><svg class="h-5 w-5" viewBox="0 0 20 20" fill="none" stroke="#444" stroke-width="1.300"><path d="M9 20V2q1.500-2 3 0v18z" fill="#fff"/><path d="M4 13c6 2 15 1 15-3 0-2-4-3-7-3M9 7C5 7 1 8 1 10"/><path d="M1 12l6-3v6z" fill="#333"/></svg><svg class="h-[6px] w-2"><use href="#caret"/></svg></button>
      <button aria-label="Look at" class="ml-2"><svg class="h-5 w-5" viewBox="0 0 20 20"><path d="M1 6h18v13H1z" fill="#fff" stroke="#444" stroke-width="1.400"/><path d="M5 10h10v5H5z" fill="#bbb" stroke="#444"/><path d="M2 6l4-4v2l9-2v3" fill="none" stroke="#444"/></svg></button>
      <button aria-label="Pan" class="ml-3"><svg class="h-5 w-5" viewBox="0 0 20 20"><path d="M6 19C5 15 2 12 1 10c0-2 2-1 4 1L3 4c0-2 2-2 3 0l1 4V2c0-2 2-2 3 0v6l1-6c1-2 3-1 3 1l-1 6 2-4c1-2 3-1 3 0l-3 8c-1 3-2 3-2 6" fill="#fff" stroke="#444" stroke-width="1.300"/></svg></button>
      <button aria-label="Zoom" class="ml-3"><svg class="h-5 w-[21px]" viewBox="0 0 21 20"><circle cx="7" cy="9" r="5.500" fill="#fff" stroke="#444" stroke-width="1.400"/><path d="M11 13l5 5" stroke="#333" stroke-width="3"/><path d="M15 4h6M18 1v6M15 9h6" stroke="#444" stroke-width="1.300"/></svg></button>
      <button aria-label="Zoom window" class="ml-3 flex items-center gap-[6px]"><svg class="h-[21px] w-[21px]" viewBox="0 0 21 21"><path d="M1 1h19v19H1z" fill="none" stroke="#666" stroke-dasharray="2 2"/><circle cx="9" cy="9" r="7" fill="#d9ece4" stroke="#444" stroke-width="1.400"/><path d="M14 14l6 6" stroke="#333" stroke-width="3"/></svg><svg class="h-[6px] w-2"><use href="#caret"/></svg></button>
      <button aria-label="Display settings" class="ml-2 flex items-center gap-[2px]"><svg class="h-5 w-5" viewBox="0 0 20 20"><path d="M1 1h18v13H1z" fill="#fff" stroke="#444" stroke-width="1.400"/><path d="M3.500 3.500h13v8h-13z" fill="#7da7dd" stroke="#456"/><path d="M8 14h4v3h3v2H5v-2h3z" fill="#bbb" stroke="#555"/></svg><svg class="h-[6px] w-2"><use href="#caret"/></svg></button>
      <button aria-label="Grid and snaps" class="ml-2 flex items-center gap-[2px]"><svg class="h-5 w-5" viewBox="0 0 20 20"><path d="M.5.500h19v19H.5zM4.500 0v20M8.500 0v20M12.500 0v20M16.500 0v20M0 4.500h20M0 8.500h20M0 12.500h20M0 16.500h20" fill="#fff" stroke="#666"/></svg><svg class="h-[6px] w-2"><use href="#caret"/></svg></button>
      <button aria-label="Viewports" class="ml-[10px] flex items-center gap-[3px]"><svg class="h-5 w-5" viewBox="0 0 20 20"><path d="M5 1h14v13h-4V6H5z" fill="#fff" stroke="#444"/><path d="M1 6h14v13H1z" fill="#85aad6" stroke="#345"/><circle cx="6" cy="14" r="3.500" fill="#cfe0f3" stroke="#345"/><circle cx="10" cy="10" r="2.500" fill="#cfe0f3" stroke="#345"/></svg><svg class="h-[6px] w-2"><use href="#caret"/></svg></button>
    </div>
  </section>

  <aside class="flex w-[312px] shrink-0 flex-col">
    <svg class="mt-[12px] mr-[11px] h-[128px] w-[118px] self-end" viewBox="1294 180 118 128" aria-label="View cube">
      <defs><radialGradient id="shade"><stop offset="0" stop-color="#777"/><stop offset="1" stop-color="#fff" stop-opacity="0"/></radialGradient></defs>
      <ellipse cx="1358" cy="283" rx="42" ry="15" fill="url(#shade)"/>
      <path d="M1311 221 1345 208 1391 217 1389 267 1360 289 1314 273z" fill="#ececec"/>
      <path d="M1311 221 1345 208 1391 217 1360 230z" fill="#fbfbfb"/>
      <path d="M1360 230 1391 217 1389 267 1360 289z" fill="#e3e3e3"/>
      <path d="M1311 221 1345 208 1391 217 1360 230zM1360 230V289M1311 221 1314 273 1360 289 1389 267 1391 217" fill="none" stroke="#888" stroke-width="1.500" stroke-dasharray="8 4"/>
      <g font-family="Liberation Sans" font-weight="700" fill="#8a8a8a"><text transform="matrix(.82 .15 0 1.200 1318 257)" font-size="12">FRONT</text><text transform="matrix(.65 -.35 0 1.250 1366 262)" font-size="10">RIGHT</text><text transform="matrix(.9 .1 -.8 .6 1345 220)" font-size="9">TOP</text></g>
      <path d="M1345 198v11" stroke="#8e8" stroke-width="2"/><path d="M1307 277l8-4" stroke="#77c" stroke-width="3"/><path d="M1387 267l10 3" stroke="#e99" stroke-width="2.500"/>
      <g font-family="Roboto" font-size="17"><text x="1339" y="198" fill="#7fe87f" font-weight="500">Y</text><text x="1295" y="287" fill="#7777cf" font-weight="700">Z</text><text x="1397" y="277" fill="#f08f8f" font-weight="700">X</text></g>
    </svg>

    <div class="mt-[8px] border-y border-l border-[#bbb] bg-[#f1f1f1]">
      <h2 class="flex h-[30px] items-center border-b border-[#bbb] pr-[6px] font-[Roboto,sans-serif] text-[13px] text-[#666]"><span class="h-[14px] w-[5px] border-x border-[#888]"></span><svg class="mr-[5px] ml-[9px] h-3 w-3"><use href="#minus"/></svg><span class="flex-1">SIMULATE</span><svg class="h-2 w-3" viewBox="0 0 12 8"><path d="M0 0v8l6-4zM6 0v8l6-4z" fill="#333"/></svg></h2>
      <div class="flex h-9 pt-[1px]" role="tablist">
        <button role="tab" aria-selected="true" class="flex w-[92px] items-center gap-2 border-r border-[#bbb] pl-[9px]"><svg class="h-[14px] w-5"><use href="#eye"/></svg>Display</button>
        <button role="tab" class="flex w-[70px] items-center gap-2 border-r border-b border-[#bbb] pl-[9px]"><svg class="h-[18px] w-[18px]" viewBox="0 0 18 18"><circle cx="9" cy="9" r="9" fill="#666"/><path d="M9 3v3M9 7.500v6M7 8h2M6.500 14h5" stroke="#fff" stroke-width="2.200"/></svg>Info</button>
        <button role="tab" class="flex w-[103px] items-center gap-2 border-r border-b border-[#bbb] pl-2"><svg class="h-5 w-5" viewBox="0 0 20 20"><path d="M1 15h3v5H1zM6 12h3v8H6zM11 14h3v6h-3zM16 10h3v10h-3z" fill="#777"/><path d="M1 12l5-7 5 4 8-8" fill="none" stroke="#888" stroke-width="1.500"/></svg>Statistics</button>
        <span class="flex-1 border-b border-[#bbb]"></span>
      </div>

      <section class="mr-4 ml-[2px] border-b-3 border-[#c4c4c4] pb-[6px]">
        <div class="flex h-[38px] items-center pl-[10px] text-[#333]"><svg class="h-[7px] w-[10px]" viewBox="0 0 8 6"><use href="#caret"/></svg><span class="ml-[10px] grid h-[17px] w-[17px]"><input id="tool" type="checkbox" checked class="col-start-1 row-start-1 h-[17px] w-[17px] appearance-none rounded border-2 border-[#777] bg-linear-to-b from-[#ccc] to-white"><svg class="pointer-events-none col-start-1 row-start-1 h-[17px] w-[17px]"><use href="#tick"/></svg></span><label for="tool" class="ml-2 text-[14px] font-bold">Tool</label></div>
        <div class="flex h-[37px] items-center pl-[13px]"><label for="holder-sel" class="w-[120px]">Tool</label><span class="relative flex"><select id="holder-sel" class="h-[33px] w-[136px] appearance-none border-2 border-[#e2e2e2] bg-white pl-[7px] text-[13px]"><option>Holder</option></select><svg class="pointer-events-none absolute top-[14px] right-[6px] h-[6px] w-2"><use href="#caret"/></svg></span></div>
        <div class="flex h-[37px] items-center pl-[13px]"><label for="transp" class="w-[126px]">Transparent</label><input id="transp" type="checkbox" class="h-[17px] w-[17px] appearance-none rounded border-2 border-[#777] bg-linear-to-b from-[#ccc] to-white"></div>
        <div class="flex h-[37px] items-center pl-[13px]"><label for="ppoint" class="w-[126px]">Programmed Point</label><input id="ppoint" type="checkbox" class="h-[17px] w-[17px] appearance-none rounded border-2 border-[#777] bg-linear-to-b from-[#ccc] to-white"></div>
      </section>

      <section class="mr-4 ml-[2px] border-b-3 border-[#c4c4c4] pt-[5px] pb-[6px]">
        <div class="flex h-[38px] items-center pl-[10px] text-[#333]"><svg class="h-[7px] w-[10px]" viewBox="0 0 8 6"><use href="#caret"/></svg><span class="ml-[10px] grid h-[17px] w-[17px]"><input id="toolpath" type="checkbox" checked class="col-start-1 row-start-1 h-[17px] w-[17px] appearance-none rounded border-2 border-[#777] bg-linear-to-b from-[#ccc] to-white"><svg class="pointer-events-none col-start-1 row-start-1 h-[17px] w-[17px]"><use href="#tick"/></svg></span><label for="toolpath" class="ml-2 text-[14px] font-bold">Toolpath</label></div>
        <div class="flex h-[37px] items-center pl-[13px]"><label for="links" class="w-[126px]">Show links</label><span class="grid h-[17px] w-[17px]"><input id="links" type="checkbox" checked class="col-start-1 row-start-1 h-[17px] w-[17px] appearance-none rounded border-2 border-[#777] bg-linear-to-b from-[#ccc] to-white"><svg class="pointer-events-none col-start-1 row-start-1 h-[17px] w-[17px]"><use href="#tick"/></svg></span></div>
        <div class="flex h-[37px] items-center pl-[13px]"><label for="leads" class="w-[126px]">Show leads</label><span class="grid h-[17px] w-[17px]"><input id="leads" type="checkbox" checked class="col-start-1 row-start-1 h-[17px] w-[17px] appearance-none rounded border-2 border-[#777] bg-linear-to-b from-[#ccc] to-white"><svg class="pointer-events-none col-start-1 row-start-1 h-[17px] w-[17px]"><use href="#tick"/></svg></span></div>
        <div class="flex h-[37px] items-center pl-[13px]"><label for="moves" class="w-[126px]">Show cutting mo...</label><span class="grid h-[17px] w-[17px]"><input id="moves" type="checkbox" checked class="col-start-1 row-start-1 h-[17px] w-[17px] appearance-none rounded border-2 border-[#777] bg-linear-to-b from-[#ccc] to-white"><svg class="pointer-events-none col-start-1 row-start-1 h-[17px] w-[17px]"><use href="#tick"/></svg></span></div>
        <div class="flex h-[37px] items-center pl-[13px]"><label for="points" class="w-[126px]">Show points</label><input id="points" type="checkbox" class="h-[17px] w-[17px] appearance-none rounded border-2 border-[#777] bg-linear-to-b from-[#ccc] to-white"></div>
        <div class="flex h-[37px] items-center pl-[13px]"><label for="mode" class="w-[120px]">Mode</label><span class="relative flex"><select id="mode" class="h-[33px] w-[136px] appearance-none border-2 border-[#e2e2e2] bg-white pl-[7px] text-[13px]"><option>Toolpath before ...</option></select><svg class="pointer-events-none absolute top-[14px] right-[6px] h-[6px] w-2"><use href="#caret"/></svg></span></div>
      </section>

      <section class="mr-4 ml-[2px] border-b-3 border-[#c4c4c4] pt-[5px] pb-[6px]">
        <div class="flex h-[38px] items-center pl-[10px] text-[#333]"><svg class="h-[10px] w-[10px]" viewBox="0 0 10 10"><path d="M0 0v10l8-5z" fill="#333"/></svg><input id="stock" type="checkbox" class="ml-[10px] h-[17px] w-[17px] appearance-none rounded border-2 border-[#777] bg-linear-to-b from-[#ccc] to-white"><label for="stock" class="ml-2 text-[14px] font-bold">Stock</label></div>
      </section>

      <section class="mr-4 ml-[2px] pt-[3px]">
        <h3 class="flex h-[38px] items-center gap-2 pl-[10px] text-[14px] font-bold text-[#333]"><svg class="h-[7px] w-[10px]" viewBox="0 0 8 6"><use href="#caret"/></svg>View</h3>
        <div class="flex h-[37px] items-center pl-[13px]"><label for="viewpoint" class="w-[120px]">Viewpoint</label><span class="relative flex"><select id="viewpoint" class="h-[33px] w-[136px] appearance-none border-2 border-[#e2e2e2] bg-white pl-[7px] text-[13px]"><option>Model</option></select><svg class="pointer-events-none absolute top-[14px] right-[6px] h-[6px] w-2"><use href="#caret"/></svg></span></div>
      </section>
      <footer class="mt-[2px] flex h-[45px] items-center justify-end border-t border-[#bbb] pr-[14px]">
        <button class="h-6 w-[75px] border border-[#aaa] bg-[#ececec] text-[16px] leading-[22px] text-[#777]">Close</button>
      </footer>
    </div>
  </aside>
</main>

<!-- timeline -->
<div class="flex h-[15px] bg-[#ccc]" role="img" aria-label="Simulation timeline">
  <span class="grow-[22] border-r border-[#ccc] bg-[#808080]"></span><span class="grow-[701] bg-[#adadad]"></span><span class="grow-[188] bg-[#808080]"></span><span class="w-[3px] bg-[#d81e2c]"></span><span class="grow-[21] bg-[#808080]"></span><span class="grow-[146] border-x border-[#ccc] bg-[#adadad]"></span><span class="grow-[8] bg-[#808080]"></span><span class="grow-[15] border-x border-[#ccc] bg-[#adadad]"></span><span class="grow-[20] bg-[#808080]"></span><span class="grow-[26] border-x border-[#ccc] bg-[#adadad]"></span><span class="grow-[10] bg-[#808080]"></span><span class="grow-[17] border-x border-[#ccc] bg-[#adadad]"></span><span class="grow-[4] bg-[#669252]"></span><span class="w-2 bg-black"></span><span class="grow-[30] bg-[#669252]"></span><span class="grow-[28] border-x border-[#ccc] bg-[#adadad]"></span><span class="grow-[90] bg-[#808080]"></span><span class="grow-[74] border-l border-[#ccc] bg-[#adadad]"></span>
</div>

</div>
</div>
</body>
</html>
